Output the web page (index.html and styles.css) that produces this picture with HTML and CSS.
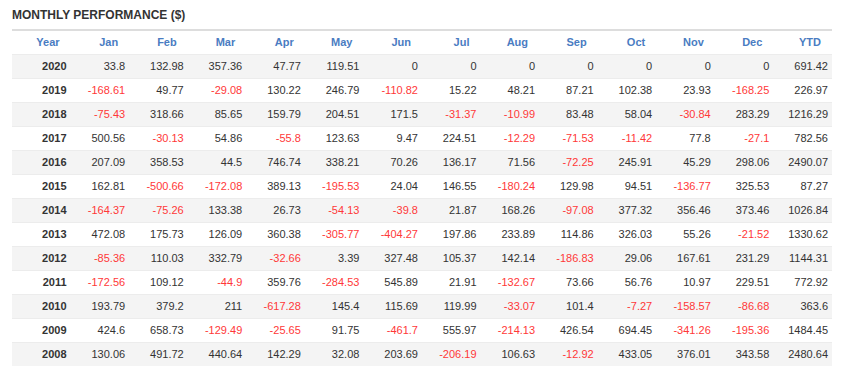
FILE: index.html
```html
<!DOCTYPE html>
<html lang="en">
<head>
  <meta charset="UTF-8" />
  <title>Monthly Performance</title>
  <link rel="stylesheet" href="styles.css">
</head>
<body>
  <div class="perf">
    <h2 class="perf-title">MONTHLY PERFORMANCE ($)</h2>
    <table class="perf-table">
      <thead>
        <tr>
          <th>Year</th><th>Jan</th><th>Feb</th><th>Mar</th><th>Apr</th><th>May</th><th>Jun</th>
          <th>Jul</th><th>Aug</th><th>Sep</th><th>Oct</th><th>Nov</th><th>Dec</th><th>YTD</th>
        </tr>
      </thead>
      <tbody id="perf-body"></tbody>
    </table>
  </div>

  <script>
    const rows = [
      [2020, 33.8, 132.98, 357.36, 47.77, 119.51, 0, 0, 0, 0, 0, 0, 0, 691.42],
      [2019, -168.61, 49.77, -29.08, 130.22, 246.79, -110.82, 15.22, 48.21, 87.21, 102.38, 23.93, -168.25, 226.97],
      [2018, -75.43, 318.66, 85.65, 159.79, 204.51, 171.5, -31.37, -10.99, 83.48, 58.04, -30.84, 283.29, 1216.29],
      [2017, 500.56, -30.13, 54.86, -55.8, 123.63, 9.47, 224.51, -12.29, -71.53, -11.42, 77.8, -27.1, 782.56],
      [2016, 207.09, 358.53, 44.5, 746.74, 338.21, 70.26, 136.17, 71.56, -72.25, 245.91, 45.29, 298.06, 2490.07],
      [2015, 162.81, -500.66, -172.08, 389.13, -195.53, 24.04, 146.55, -180.24, 129.98, 94.51, -136.77, 325.53, 87.27],
      [2014, -164.37, -75.26, 133.38, 26.73, -54.13, -39.8, 21.87, 168.26, -97.08, 377.32, 356.46, 373.46, 1026.84],
      [2013, 472.08, 175.73, 126.09, 360.38, -305.77, -404.27, 197.86, 233.89, 114.86, 326.03, 55.26, -21.52, 1330.62],
      [2012, -85.36, 110.03, 332.79, -32.66, 3.39, 327.48, 105.37, 142.14, -186.83, 29.06, 167.61, 231.29, 1144.31],
      [2011, -172.56, 109.12, -44.9, 359.76, -284.53, 545.89, 21.91, -132.67, 73.66, 56.76, 10.97, 229.51, 772.92],
      [2010, 193.79, 379.2, 211, -617.28, 145.4, 115.69, 119.99, -33.07, 101.4, -7.27, -158.57, -86.68, 363.6],
      [2009, 424.6, 658.73, -129.49, -25.65, 91.75, -461.7, 555.97, -214.13, 426.54, 694.45, -341.26, -195.36, 1484.45],
      [2008, 130.06, 491.72, 440.64, 142.29, 32.08, 203.69, -206.19, 106.63, -12.92, 433.05, 376.01, 343.58, 2480.64]
    ];

    const body = document.getElementById('perf-body');
    rows.forEach((row) => {
      const tr = document.createElement('tr');
      row.forEach((value, i) => {
        const td = document.createElement('td');
        td.textContent = value;
        if (i === 0) td.className = 'year';
        else if (value < 0) td.className = 'neg';
        tr.appendChild(td);
      });
      body.appendChild(tr);
    });
  </script>
</body>
</html>
```

FILE: styles.css
```css
* {
  box-sizing: border-box;
}
body {
  margin: 0;
  padding: 7px 12px 0;
  font-family: "Liberation Sans", Arial, sans-serif;
  font-size: 11px;
  color: #333;
  background: #fff;
}
.perf-title {
  margin: 0 0 6px;
  font-size: 12px;
  line-height: 16px;
  font-weight: bold;
  color: #333;
}
.perf-table {
  width: 820px;
  border-collapse: collapse;
  table-layout: fixed;
  border-top: 2px solid #ddd;
}
.perf-table th {
  height: 24px;
  padding: 0 11px 0 0;
  text-align: right;
  font-weight: bold;
  color: #4a7cc2;
}
.perf-table td {
  height: 24px;
  padding: 0 4px 0 0;
  text-align: right;
  border-top: 1px solid #ececec;
}
.perf-table tbody tr:nth-child(odd) {
  background: #f4f4f4;
}
.perf-table td.year {
  font-weight: bold;
}
.perf-table td.neg {
  color: #ff3838;
}
```
